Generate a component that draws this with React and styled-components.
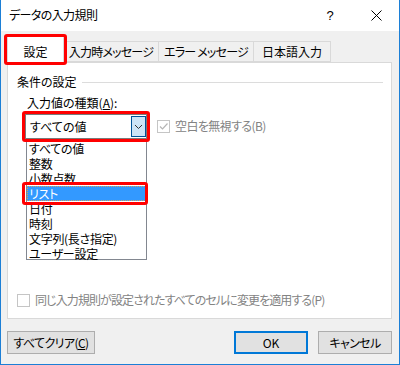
import React from 'react'
import styled, { createGlobalStyle } from 'styled-components'

const GlobalStyle = createGlobalStyle`
  html, body {
    margin: 0;
    padding: 0;
    background: #ffffff;
  }
  body {
    font-family: 'Noto Sans CJK JP', 'Noto Sans', sans-serif;
    font-size: 12px;
    font-feature-settings: 'palt';
    color: #000000;
  }
`;

const Window = styled.div`
  width: 400px;
  height: 365px;
  box-sizing: border-box;
  border: 1px solid #1c7fd6;
  border-top: 0;
  display: flex;
  flex-direction: column;
  background: #f0f0f0;
`;

const TitleBar = styled.div`
  height: 31px;
  background: #ffffff;
  display: flex;
  align-items: center;
  padding: 0 0 0 8px;
  flex-shrink: 0;
`;

const Title = styled.div`
  flex: 1;
  line-height: 16px;
  margin-top: -1px;
  letter-spacing: -0.6px;
`;

const TitleButton = styled.div`
  width: 46px;
  height: 31px;
  display: flex;
  align-items: center;
  justify-content: center;
  font-size: 13px;
  font-family: 'Liberation Sans', sans-serif;
`;

const Body = styled.div`
  flex: 1;
  padding: 5px 7px 8px 6px;
  display: flex;
  flex-direction: column;
`;

const TabRow = styled.div`
  display: flex;
  align-items: flex-end;
  position: relative;
  z-index: 1;
`;

const Tab = styled.div`
  position: relative;
  box-sizing: border-box;
  border: 1px solid #d9d9d9;
  border-bottom: ${p => (p.$active ? '0' : '1px solid #d9d9d9')};
  background: ${p => (p.$active ? '#ffffff' : '#f0f0f0')};
  height: ${p => (p.$active ? '27px' : '21px')};
  width: ${p => p.$w}px;
  padding-top: ${p => (p.$active ? '5px' : '0')};
  margin-bottom: ${p => (p.$active ? '-1px' : '0')};
  margin-left: ${p => (p.$first ? '0' : '-1px')};
  display: flex;
  justify-content: center;
  line-height: 19px;
  white-space: nowrap;
  letter-spacing: ${p => (p.$tight ? '-0.8px' : '0')};
`;

const RedFrame = styled.div`
  position: absolute;
  left: ${p => p.$l}px;
  right: ${p => p.$r}px;
  top: ${p => p.$t}px;
  bottom: ${p => p.$b}px;
  border: 3px solid #ff0000;
  border-radius: 3px;
  pointer-events: none;
  z-index: 3;
`;

const Panel = styled.div`
  height: 257px;
  box-sizing: border-box;
  border: 1px solid #d9d9d9;
  background: #ffffff;
  padding: 11px 8px 0 9px;
  display: flex;
  flex-direction: column;
`;

const GroupHeader = styled.div`
  display: flex;
  align-items: center;
  gap: 5px;
  line-height: 16px;
  color: #000000;
`;

const GroupLine = styled.div`
  flex: 1;
  height: 1px;
  background: #dcdcdc;
`;

const GroupBody = styled.div`
  padding-left: 8px;
  display: flex;
  flex-direction: column;
`;

const FieldLabel = styled.div`
  margin-top: 5px;
  line-height: 16px;
  padding-left: 2px;
`;

const FieldRow = styled.div`
  display: flex;
  align-items: flex-start;
  margin-top: 3px;
`;

const ComboColumn = styled.div`
  width: 122px;
  display: flex;
  flex-direction: column;
`;

const Select = styled.div`
  position: relative;
  height: 25px;
  box-sizing: border-box;
  border: 1px solid #7a7a7a;
  background: #ffffff;
  display: flex;
  align-items: center;
  padding: 1px 1px 1px 4px;
`;

const SelectValue = styled.div`
  flex: 1;
  line-height: 16px;
`;

const DropButton = styled.div`
  width: 15px;
  height: 21px;
  box-sizing: border-box;
  background: #cce4f7;
  border: 1px solid #005499;
  display: flex;
  align-items: center;
  justify-content: center;
  margin-right: -1px;
`;

const List = styled.div`
  margin-top: 1px;
  margin-left: 1px;
  height: 120px;
  box-sizing: border-box;
  border: 1px solid #828790;
  background: #ffffff;
  display: flex;
  flex-direction: column;
`;

const ListItem = styled.div`
  position: relative;
  height: 15px;
  line-height: 15px;
  padding-left: 2px;
  box-sizing: border-box;
  background: ${p => (p.$selected ? '#3399ff' : 'transparent')};
  color: ${p => (p.$selected ? '#ffffff' : '#000000')};
  outline: ${p => (p.$selected ? '1px dotted #d9a25a' : 'none')};
  outline-offset: -1px;
  white-space: nowrap;
  letter-spacing: -0.3px;
`;

const CheckRow = styled.label`
  display: flex;
  align-items: center;
  gap: 5px;
  color: ${p => (p.$disabled ? '#838383' : '#000000')};
  line-height: 16px;
  white-space: nowrap;
`;

const CheckText = styled.span`
  letter-spacing: ${p => p.$ls}px;
`;

const CheckBox = styled.span`
  width: 13px;
  height: 13px;
  box-sizing: border-box;
  border: 1px solid #c5c5c5;
  background: #ffffff;
  display: flex;
  align-items: center;
  justify-content: center;
`;

const IgnoreBlank = styled(CheckRow)`
  margin-left: 10px;
  margin-top: 4px;
`;

const ApplyAll = styled(CheckRow)`
  margin-top: auto;
  margin-bottom: 10px;
  margin-left: 0;
`;

const ButtonRow = styled.div`
  display: flex;
  align-items: center;
  margin-top: 12px;
`;

const Button = styled.div`
  height: 23px;
  width: ${p => p.$w}px;
  box-sizing: border-box;
  background: #e1e1e1;
  border: ${p => (p.$default ? '2px solid #0078d7' : '1px solid #adadad')};
  display: flex;
  align-items: center;
  justify-content: center;
  margin-left: ${p => (p.$push ? 'auto' : p.$gap ? `${p.$gap}px` : '0')};
  white-space: nowrap;
  letter-spacing: ${p => (p.$tight ? '-0.6px' : '0')};
`;

const Chevron = () => (
  <svg width="9" height="6" viewBox="0 0 9 6">
    <path d="M1 1L4.5 4.5L8 1" fill="none" stroke="#333333" strokeWidth="1" />
  </svg>
);

const CheckMark = () => (
  <svg width="11" height="11" viewBox="0 0 11 11">
    <path d="M2 5.5L4.5 8L9.5 2.5" fill="none" stroke="#b5b5b5" strokeWidth="1.2" />
  </svg>
);

const CloseIcon = () => (
  <svg width="11" height="11" viewBox="0 0 11 11">
    <path d="M0.5 0.5L10.5 10.5M10.5 0.5L0.5 10.5" stroke="#000000" strokeWidth="1" />
  </svg>
);

const items = ['すべての値', '整数', '小数点数', 'リスト', '日付', '時刻', '文字列(長さ指定)', 'ユーザー設定'];

const App = () => {
  return (
    <>
      <GlobalStyle />
      <Window>
        <TitleBar>
          <Title>データの入力規則</Title>
          <TitleButton>?</TitleButton>
          <TitleButton><CloseIcon /></TitleButton>
        </TitleBar>
        <Body>
          <TabRow>
            <Tab $active $first $w={57}>
              設定
              <RedFrame $l={-4} $r={-4} $t={-3} $b={-2} />
            </Tab>
            <Tab $w={96} $tight>入力時メッセージ</Tab>
            <Tab $w={96} $tight>エラー メッセージ</Tab>
            <Tab $w={78}>日本語入力</Tab>
          </TabRow>
          <Panel>
            <GroupHeader>
              条件の設定
              <GroupLine />
            </GroupHeader>
            <GroupBody>
              <FieldLabel>入力値の種類(<u>A</u>):</FieldLabel>
              <FieldRow>
                <ComboColumn>
                  <Select>
                    <SelectValue>すべての値</SelectValue>
                    <DropButton><Chevron /></DropButton>
                    <RedFrame $l={-4} $r={-4} $t={-4} $b={-4} />
                  </Select>
                  <List>
                    {items.map(item => (
                      <ListItem key={item} $selected={item === 'リスト'}>
                        {item}
                        {item === 'リスト' && <RedFrame $l={-5} $r={-2} $t={-4} $b={-4} />}
                      </ListItem>
                    ))}
                  </List>
                </ComboColumn>
                <IgnoreBlank $disabled>
                  <CheckBox><CheckMark /></CheckBox>
                  <CheckText $ls={-0.6}>空白を無視する(B)</CheckText>
                </IgnoreBlank>
              </FieldRow>
            </GroupBody>
            <ApplyAll $disabled>
              <CheckBox />
              <CheckText $ls={-0.9}>同じ入力規則が設定されたすべてのセルに変更を適用する(P)</CheckText>
            </ApplyAll>
          </Panel>
          <ButtonRow>
            <Button $w={88} $tight>すべてクリア(<u>C</u>)</Button>
            <Button $w={74} $push $default>OK</Button>
            <Button $w={74} $gap={10} $tight>キャンセル</Button>
          </ButtonRow>
        </Body>
      </Window>
    </>
  )
}

export default App;
